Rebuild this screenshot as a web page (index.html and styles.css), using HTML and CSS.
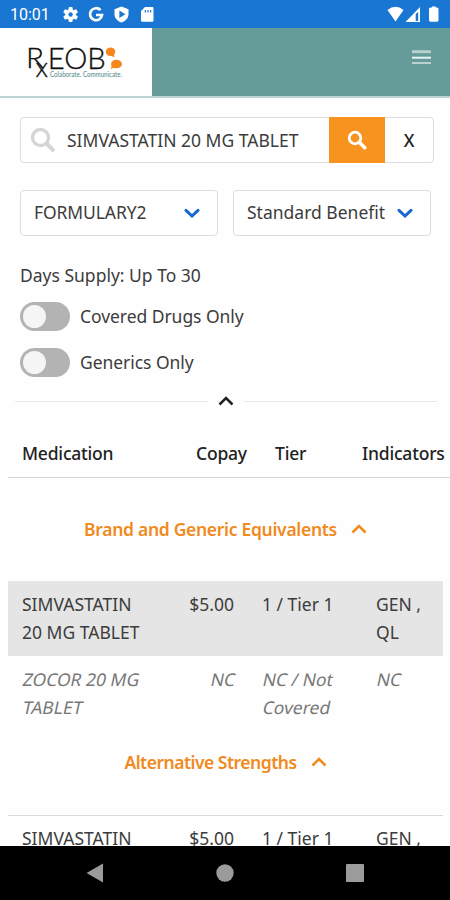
FILE: index.html
```html
<!DOCTYPE html>
<html lang="en">
<head>
<meta charset="utf-8">
<title>RxEOB</title>
<link rel="stylesheet" href="styles.css">
</head>
<body>
<div class="status">
  <span class="clock">10:01</span>
  <svg class="status-left" width="100" height="28" viewBox="0 0 100 28" fill="#fff">
    <g transform="translate(10.6 14.5)"><circle r="3.8" fill="none" stroke="#fff" stroke-width="3.2"/><path d="M-1.7-7.5h3.4l.6 3h-4.6zM-1.7 7.5h3.4l.6-3h-4.6z"/><path transform="rotate(60)" d="M-1.7-7.5h3.4l.6 3h-4.6zM-1.7 7.5h3.4l.6-3h-4.6z"/><path transform="rotate(120)" d="M-1.7-7.5h3.4l.6 3h-4.6zM-1.7 7.5h3.4l.6-3h-4.6z"/></g>
    <path d="M40.5 10.2A6 6 0 1 0 42 15h-6" fill="none" stroke="#fff" stroke-width="2.700"/>
    <path fill-rule="evenodd" d="M61.5 6.5l7 2.7v5c0 3.900-3 6.700-7 8.300-4-1.600-7-4.400-7-8.300v-5zM59.400 10.500v7.500l6-3.750z"/>
    <path fill-rule="evenodd" d="M85 7h7.200q1.300 0 1.300 1.300v12.200q0 1.200-1.300 1.200h-9.900q-1.300 0-1.300-1.200V11zM84.700 10v2.500h1.200V10zM87.400 10v2.500h1.200V10zM90 10v2.500h1.200V10z"/>
  </svg>
  <svg class="status-right" width="56" height="28" viewBox="0 0 56 28" fill="#fff">
    <path d="M.5 10Q8.500 3.500 16.500 10L8.500 21.500z"/>
    <path fill-rule="evenodd" d="M33 7v15H18.500zM31.200 12v9h-2.500v-7z"/>
    <path d="M43.500 7.500h1.500V6.500h3.800v1H50q1.500 0 1.500 1.500v11q0 1.700-1.500 1.700h-6.500q-1.500 0-1.500-1.700V9q0-1.500 1.500-1.500z"/>
  </svg>
</div>
<header class="header">
  <div class="brand">
    <svg width="152" height="68" viewBox="0 28 152 68">
      <g class="logo-letters">
        <text x="26" y="68" font-size="28" textLength="18" lengthAdjust="spacingAndGlyphs">R</text>
        <text x="35.500" y="76.500" font-size="28" textLength="12.500" lengthAdjust="spacingAndGlyphs">x</text>
        <text x="47.800" y="69" font-size="29.500" textLength="58" lengthAdjust="spacingAndGlyphs">EOB</text>
      </g>
      <text class="logo-tag" x="50" y="76.800" textLength="72" lengthAdjust="spacingAndGlyphs">Colaborate. Communicate.</text>
      <g fill="#f5871f"><ellipse cx="110.500" cy="51.800" rx="4.800" ry="4.200"/><path d="M110 55l4-1.500.3 4z"/><ellipse cx="116.500" cy="64" rx="5.500" ry="4.300"/><path d="M112 65l4 2-5.300 2z"/></g>
    </svg>
  </div>
  <svg class="menu" width="20" height="18" viewBox="0 0 20 18"><path d="M0 3.700h19" stroke="#b5d0cf" stroke-width="3"/><path d="M0 9.700h19" stroke="#e8f4f3" stroke-width="2"/><path d="M0 15h19" stroke="#b9d2d1" stroke-width="2"/></svg>
</header>
<main class="content">
  <div class="search">
    <svg class="search-ghost" width="26" height="26" viewBox="0 0 26 26"><circle cx="10.500" cy="10.500" r="8" fill="none" stroke="#d5d5d5" stroke-width="3.400"/><path d="M16.500 16.500l7.500 7.500" stroke="#d5d5d5" stroke-width="4"/></svg>
    <span class="query">SIMVASTATIN 20 MG TABLET</span>
    <div class="go"><svg width="20" height="20" viewBox="0 0 20 20"><circle cx="8" cy="8" r="5.800" fill="none" stroke="#fff" stroke-width="2.800"/><path d="M12.300 12.300l5.400 5.400" stroke="#fff" stroke-width="3.600" stroke-linecap="round"/></svg></div>
    <div class="clear">X</div>
  </div>
  <div class="selects">
    <div class="select"><span class="formulary">FORMULARY2</span><svg width="16" height="11" viewBox="0 0 16 11"><path d="M2 2.300l6 5.700 6-5.700"/></svg></div>
    <div class="select"><span class="benefit">Standard Benefit</span><svg width="16" height="11" viewBox="0 0 16 11"><path d="M2 2.300l6 5.700 6-5.700"/></svg></div>
  </div>
  <div class="days">Days Supply: Up To 30</div>
  <div class="option"><i class="toggle"></i><span>Covered Drugs Only</span></div>
  <div class="option"><i class="toggle"></i><span>Generics Only</span></div>
  <div class="divider"><svg width="16" height="12" viewBox="0 0 16 12"><path d="M1.500 9.500L8 3l6.500 6.500"/></svg></div>
</main>
<section class="table">
  <div class="row head"><span>Medication</span><span>Copay</span><span>Tier</span><span>Indicators</span></div>
  <div class="group first"><span>Brand and Generic Equivalents</span><svg width="16" height="12" viewBox="0 0 16 12"><path d="M1.500 9.500L8 3l6.500 6.500"/></svg></div>
  <div class="row shaded"><span>SIMVASTATIN<br>20 MG TABLET</span><span class="copay">$5.00</span><span class="tier">1 / Tier 1</span><span>GEN ,<br>QL</span></div>
  <div class="row nc"><span><em>ZOCOR 20 MG</em><br><em>TABLET</em></span><span class="copay"><em>NC</em></span><span class="tier"><em>NC / Not</em><br><em>Covered</em></span><span><em>NC</em></span></div>
  <div class="group second"><span>Alternative Strengths</span><svg width="16" height="12" viewBox="0 0 16 12"><path d="M1.500 9.500L8 3l6.500 6.500"/></svg></div>
  <div class="row lined"><span>SIMVASTATIN</span><span class="copay">$5.00</span><span class="tier">1 / Tier 1</span><span>GEN ,</span></div>
</section>
<nav class="nav">
  <svg width="18" height="20" viewBox="0 0 18 20"><path d="M.5 10L17 .5v19z"/></svg>
  <svg width="18" height="18" viewBox="0 0 18 18"><circle cx="9" cy="9" r="8.700"/></svg>
  <svg width="18" height="18" viewBox="0 0 18 18"><rect width="18" height="18" rx="1"/></svg>
</nav>
</body>
</html>
```
FILE: styles.css
```css
* { box-sizing: border-box; }
body {
  margin: 0;
  width: 450px;
  height: 900px;
  overflow: hidden;
  display: flex;
  flex-direction: column;
  background: #fefefe;
  color: #3c3c3c;
  font: 17.5px/28px "Noto Sans", sans-serif;
  white-space: nowrap;
}
svg { display: block; flex: none; }
.status { flex: none; height: 28px; background: #1976d2; color: #fff; display: flex; padding: 0 7px 0 10px; }
.clock { width: 50px; font: 16px/30px Roboto, sans-serif; }
.status-right { margin-left: auto; }
.header { flex: none; height: 70px; background: #659c9a; border-bottom: 2px solid #bcd5d3; display: flex; justify-content: space-between; }
.brand { width: 152px; background: #fff; }
.logo-letters { font-family: Lato, sans-serif; font-weight: 300; fill: #111; stroke: #111; stroke-width: .35px; }
.logo-tag { font: 400 7px Lato, sans-serif; fill: #4b8583; }
.menu { margin: 20px 18px 0 0; }
.content { flex: none; height: 333px; padding: 19px 16px 0 20px; }
.search { height: 46px; display: flex; align-items: center; border: 1px solid #dcdcdc; border-radius: 4px; padding-left: 9px; background: #fff; }
.query { margin-left: 11px; width: 262px; }
.go { width: 56px; height: 46px; background: #f7931e; display: flex; align-items: center; justify-content: center; }
.clear { flex: 1; text-align: center; color: #222; font-weight: 500; }
.selects { display: flex; gap: 15px; margin-top: 27px; }
.select { width: 198px; height: 46px; display: flex; align-items: center; justify-content: space-between; border: 1px solid #dcdcdc; border-radius: 4px; padding: 0 17px 0 13px; background: #fff; }
.select span { padding-bottom: 2px; }
.formulary { letter-spacing: -.1px; }
.select svg { fill: none; stroke: #1767d2; stroke-width: 3; stroke-linecap: round; }
.days { margin: 25px 0 13px; }
.option { height: 29px; display: flex; align-items: center; gap: 10px; margin-bottom: 17px; letter-spacing: -.05px; }
.option span { padding-bottom: 2px; }
.toggle { width: 50px; height: 29px; padding: 3px; border-radius: 15px; background: #b3b3b3; }
.toggle::before { content: ""; display: block; width: 23px; height: 23px; border-radius: 50%; background: #f5f5f5; }
.divider { display: flex; align-items: center; gap: 10px; height: 14px; margin: 0 -3px 0 -5px; }
.divider::before, .divider::after { content: ""; flex: 1; height: 1px; background: #e9e9e9; }
.divider svg { fill: none; stroke: #222; stroke-width: 2.5; }
.table { flex: 1; min-height: 0; overflow: hidden; padding-left: 8px; }
.row { display: grid; grid-template-columns: 155px 57px 128px 1fr; width: 435px; padding: 10px 0 0 14px; height: 75px; line-height: 27.5px; }
.copay { text-align: right; }
.tier { padding-left: 28px; }
.row > span:last-child { padding-left: 14px; }
.row.head { grid-template-columns: 174px 79px 87px 1fr; width: 442px; height: 47px; padding-top: 9px; border-bottom: 1px solid #d5d5d5; color: #222; font-weight: 500; letter-spacing: -.2px; }
.row.head > span { padding-left: 0; }
.group { display: flex; align-items: center; justify-content: center; gap: 14px; width: 435px; color: #f08a1d; font-weight: 600; letter-spacing: -.3px; }
.group svg { fill: none; stroke: #f08a1d; stroke-width: 2.5; }
.first { height: 103px; padding-bottom: 2px; }
.second { height: 84px; padding-bottom: 22px; letter-spacing: -.5px; }
.shaded { background: #e5e5e5; }
.nc { color: #777; }
.nc em { display: inline-block; font-style: normal; transform: translateX(1px) skewX(-12deg); }
.lined { height: 74px; padding-top: 9px; border-top: 1px solid #d9d9d9; }
.nav { flex: none; height: 54px; background: #000; display: flex; align-items: center; justify-content: space-between; padding: 0 86px; }
.nav svg { fill: #9b9b9b; }
```
